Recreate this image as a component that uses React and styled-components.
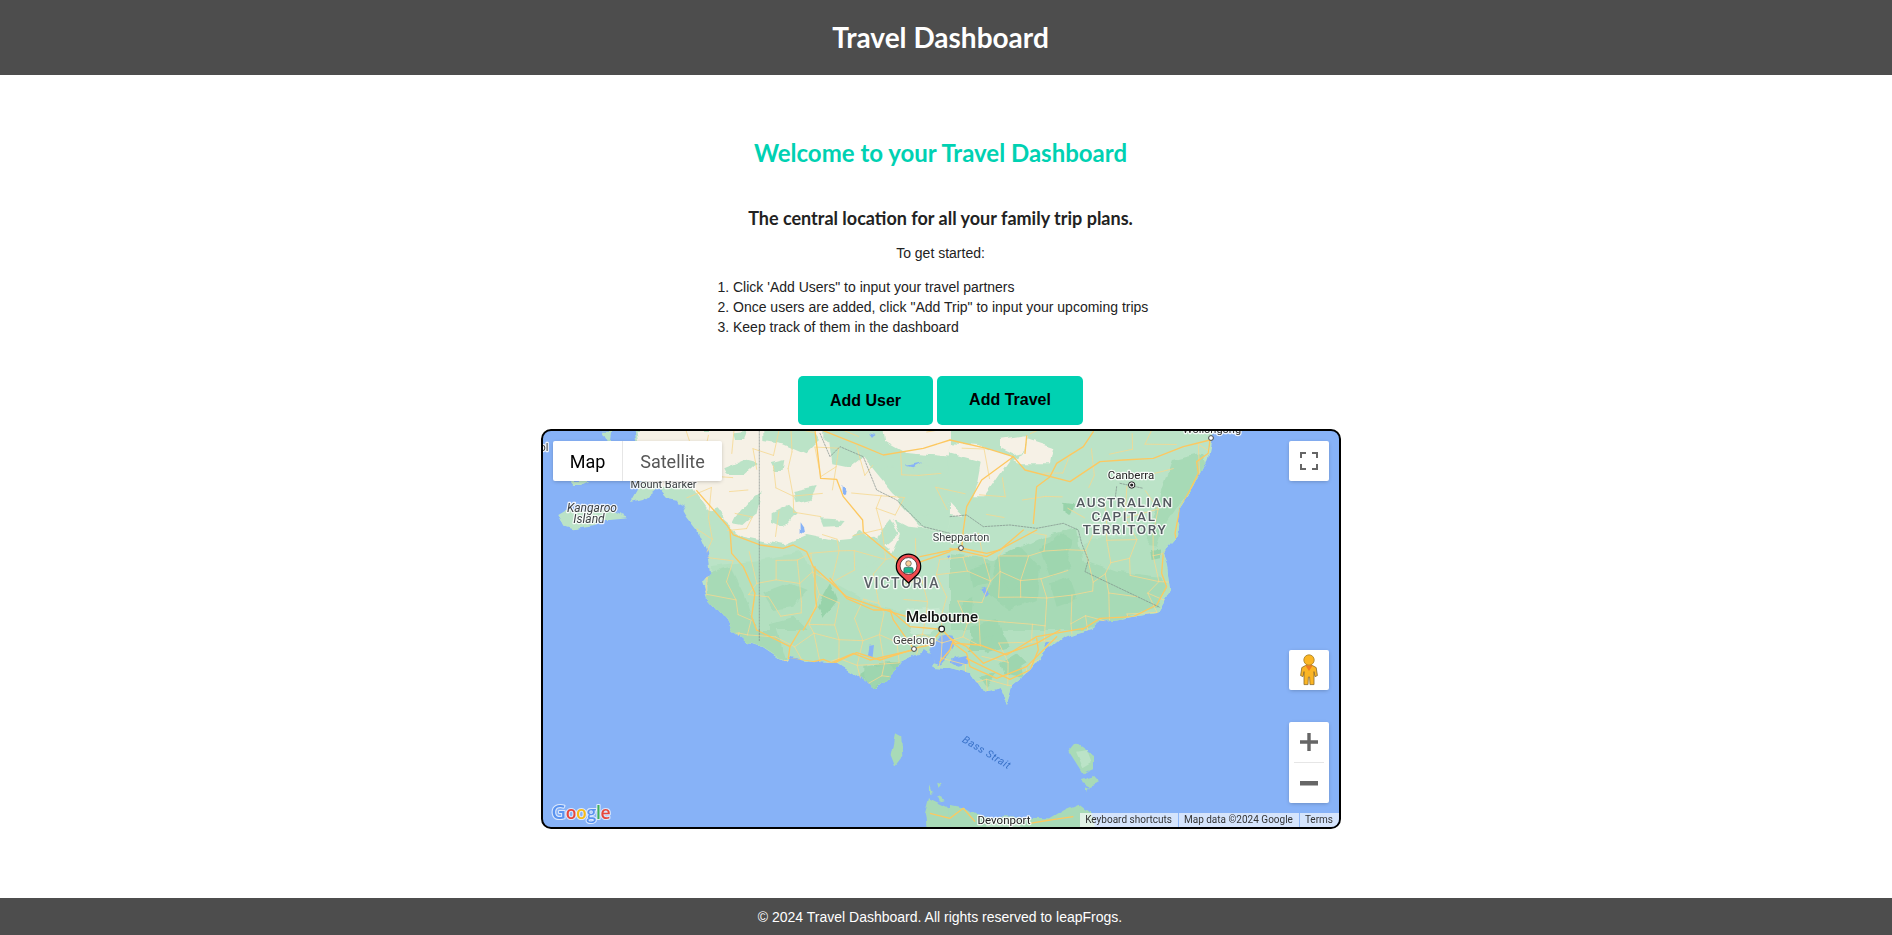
import React from "react";
import styled, { createGlobalStyle } from "styled-components";

const Global = createGlobalStyle`
  html, body { margin: 0; padding: 0; height: 100%; background: #fff; overflow: hidden; }
  body { font-family: "Liberation Sans", Arial, sans-serif; color: #222; }
  #root { height: 100%; }
`;

const Page = styled.div`
  min-height: 935px;
  display: flex;
  flex-direction: column;
`;
const Header = styled.header`
  height: 73px;
  padding: 0 11px 2px 0;
  background: #4d4d4d;
  display: flex;
  align-items: center;
  justify-content: center;
`;
const Brand = styled.h1`
  margin: 0;
  font: 700 28px/1 Lato, sans-serif;
  color: #fff;
`;
const Main = styled.main`
  flex: 1;
  padding: 63px 11px 0 0;
  display: flex;
  flex-direction: column;
  align-items: center;
`;
const Welcome = styled.h2`
  margin: 0;
  font: 700 24px/29px Lato, sans-serif;
  color: #00d1b2;
`;
const Tagline = styled.h3`
  margin: 40px 0 0;
  font: 700 18px/22px Lato, sans-serif;
  color: #222;
`;
const Intro = styled.p`
  margin: 14px 0 0;
  font-size: 14px;
  line-height: 20px;
`;
const Steps = styled.ol`
  margin: 14px 0 0;
  padding: 0 0 0 16px;
  width: 447px;
  box-sizing: border-box;
  font-size: 14px;
  line-height: 20px;
`;
const ButtonRow = styled.div`
  margin-top: 39px;
  display: flex;
  gap: 4px;
`;
const ActionButton = styled.button`
  width: ${(p) => p.$width}px;
  height: 49px;
  padding: 0 0 ${(p) => p.$lift}px;
  border: none;
  border-radius: 5px;
  background: #00d1b2;
  color: #000;
  font: 700 16px "Liberation Sans", Arial, sans-serif;
`;
const MapFrame = styled.section`
  position: relative;
  margin: 4px 0 0 1px;
  width: 800px;
  height: 400px;
  box-sizing: border-box;
  border: 2px solid #000;
  border-radius: 10px;
  overflow: hidden;
  background: #87b2f7;
`;
const MapArt = styled.svg`
  display: block;
  position: absolute;
  left: -2px;
  top: -2px;
  width: 800px;
  height: 400px;
`;
const MapLabel = styled.text`
  font-family: Roboto, sans-serif;
  font-size: ${(p) => p.$size || 11}px;
  font-weight: ${(p) => p.$weight || 400};
  font-style: ${(p) => (p.$italic ? "italic" : "normal")};
  letter-spacing: ${(p) => p.$spacing || 0}px;
  fill: ${(p) => p.$color || "#3c4043"};
  text-anchor: middle;
  paint-order: stroke;
  stroke: rgba(255, 255, 255, ${(p) => (p.$nohalo ? 0 : 0.85)});
  stroke-width: 2.5px;
  stroke-linejoin: round;
`;
const LogoLetter = styled.tspan`
  fill: ${(p) => p.$color};
  font-size: ${(p) => p.$size || 17.5}px;
`;
const LogoText = styled.text`
  font-family: "Open Sans", Roboto, sans-serif;
  font-weight: 600;
  letter-spacing: -0.3px;
  paint-order: stroke;
  stroke: rgba(255, 255, 255, 0.7);
  stroke-width: 2.2px;
  stroke-linejoin: round;
`;
const MapTypes = styled.div`
  position: absolute;
  left: 10px;
  top: 10px;
  height: 40px;
  display: flex;
  background: #fff;
  border-radius: 2px;
  box-shadow: 0 1px 4px -1px rgba(0, 0, 0, 0.3);
`;
const MapType = styled.div`
  width: ${(p) => p.$width}px;
  display: flex;
  align-items: center;
  justify-content: center;
  font: 400 18px Roboto, sans-serif;
  color: ${(p) => (p.$active ? "#000" : "#565656")};
  & + & { border-left: 1px solid #e6e6e6; }
`;
const ControlStack = styled.div`
  position: absolute;
  right: 10px;
  top: ${(p) => p.$top}px;
  width: 40px;
  background: #fff;
  border-radius: 2px;
  box-shadow: 0 1px 4px -1px rgba(0, 0, 0, 0.3);
  display: flex;
  flex-direction: column;
`;
const ControlCell = styled.div`
  height: 40px;
  display: flex;
  align-items: center;
  justify-content: center;
`;
const ControlRule = styled.div`
  height: 1px;
  margin: 0 5px;
  background: #e6e6e6;
`;
const Attribution = styled.div`
  position: absolute;
  right: 0;
  bottom: 0;
  height: 14px;
  display: flex;
  background: rgba(255, 255, 255, 0.65);
  font: 400 10px/14px Roboto, sans-serif;
  color: #333;
`;
const AttributionItem = styled.span`
  padding: 0 6px 0 5px;
  & + & { border-left: 1px solid rgba(134, 178, 247, 0.9); }
`;
const Footer = styled.footer`
  height: 37px;
  padding-right: 12px;
  background: #4d4d4d;
  color: #fff;
  display: flex;
  align-items: center;
  justify-content: center;
  font-size: 14px;
`;

const LAND = "M633 415L640 470L643 480L630 503L643 500L658 488L667 498L677 500L687 517L697 530L707 553L710 573L702 582L707 597L727 620L732 630L747 643L763 647L787 663L790 658L813 662L837 663L877 689L893 673L900 662L925 650L932 655L933 662L931 665L934 667L950 668L970 673L983 692L1000 688L1007 705L1012 685L1030 670L1047 650L1063 637L1078 633L1090 630L1100 622L1157 613L1170 590L1167 567L1163 553L1177 537L1180 507L1193 487L1208 457L1212 437L1227 415Z";

/* Fine mesh of country roads: a jittered lattice with a fixed seed. */
const buildMesh = () => {
  let seed = 20240;
  const rnd = () => {
    seed = (seed * 1664525 + 1013904223) % 4294967296;
    return seed / 4294967296;
  };
  const step = 21;
  const cols = 26;
  const rows = 14;
  const pts = [];
  for (let r = 0; r < rows; r++) {
    pts.push([]);
    for (let c = 0; c < cols; c++) {
      pts[r].push([690 + c * step + (rnd() - 0.5) * 14, 430 + r * step + (rnd() - 0.5) * 14]);
    }
  }
  let d = "";
  for (let r = 0; r < rows; r++) {
    for (let c = 0; c < cols; c++) {
      const [x, y] = pts[r][c];
      const keep = y > 540 ? 0.72 : 0.34;
      if (c + 1 < cols && rnd() < keep) d += `M${x.toFixed(1)} ${y.toFixed(1)}L${pts[r][c + 1][0].toFixed(1)} ${pts[r][c + 1][1].toFixed(1)}`;
      if (r + 1 < rows && rnd() < keep) d += `M${x.toFixed(1)} ${y.toFixed(1)}L${pts[r + 1][c][0].toFixed(1)} ${pts[r + 1][c][1].toFixed(1)}`;
    }
  }
  return d;
};
const MESH = buildMesh();

const Terrain = () => (
  <g filter="url(#tile-edge)">
    <path d={LAND} fill="#bbe3c7" />
    <g clipPath="url(#land-clip)">
      <g transform="translate(530 420) scale(.3333)" fill="#f6f1e6">
        <path d="M320 30L340 170L400 205L480 190L530 260L600 320L640 350L760 375L830 345L950 370L990 330L1050 385L1085 400L1110 345L1090 300L1130 320L1190 325L1260 340L1260 250L1180 300L1090 220L1000 110L880 60L880 30Z" />
        <path d="M1060 30L1260 30L1260 110L1130 100L1060 60Z" />
      </g>
      <g transform="translate(530 420) scale(.3333)" fill="#bbe3c7">
        <path d="M580 145L640 120L680 130L640 165L590 165Z" />
        <path d="M610 40L650 35L640 60L615 60Z" />
        <path d="M720 130L760 120L755 150L730 150Z" />
        <path d="M790 210L860 195L845 240L800 250Z" />
        <path d="M725 280L775 255L800 280L760 320L725 305Z" />
        <path d="M660 240L695 215L680 280L640 315L610 310L625 280Z" />
        <path d="M505 285L560 265L585 298L540 305Z" />
        <path d="M870 295L950 300L935 318L880 320Z" />
        <path d="M1040 400L1105 345L1080 300L1040 350Z" />
        <path d="M700 30L850 30L870 60L830 100L760 70L700 60Z" />
        <path d="M900 30L1060 30L1070 90L1130 100L1260 110L1260 170L1180 130L1100 130L1050 150L1000 100Z" />
        <path d="M900 60L1000 110L960 140L910 130Z" />
        <path d="M1100 240L1170 320L1260 340L1260 250L1180 290L1120 230Z" />
      </g>
      <g transform="translate(950 420) scale(.3333)" fill="#f6f1e6">
        <path d="M0 70L90 75L185 110L130 190L100 232L70 232L85 180L95 125L0 100Z" />
        <path d="M150 60L230 48L222 100L190 105L150 85Z" />
        <path d="M232 55L310 80L300 130L215 130L190 118L225 100Z" />
        <path d="M478 362L550 350L566 430L578 460L540 495L510 490L532 450L485 415Z" />
        <path d="M0 250L40 292L0 285Z" />
        <path d="M345 525L360 530L372 558L355 550Z" />
      </g>
      <path d="M712 566L760 560L800 552L820 575L880 608L950 622L1000 606L1050 575L1090 540L1140 535L1190 480L1230 430L1240 720L700 720Z" fill="#b3e0c0" />
      <g transform="translate(530 420) scale(.3333)" fill="#a7dab6">
        <path d="M530 460L600 440L640 520L680 630L600 630L530 530Z" />
        <path d="M700 520L780 490L830 510L790 560L730 570Z" />
        <path d="M860 560L900 490L920 540L880 590Z" fill="#98d3aa" />
        <path d="M720 610L790 590L830 630L720 630Z" />
      </g>
      <g transform="translate(530 630) scale(.3333)" fill="#a7dab6">
        <path d="M600 0L740 0L770 95L700 50L640 35Z" />
        <path d="M980 140L1040 100L1110 95L1090 130L1040 178Z" fill="#98d3aa" />
      </g>
      <g transform="translate(950 420) scale(.3333)" fill="#a7dab6">
        <path d="M280 350L380 320L400 420L500 455L630 470L650 490L620 560L500 600L400 630L0 630L0 400L130 420Z" />
        <path d="M670 120L760 100L775 150L725 210L680 260L640 320L620 380L590 375L600 330L640 200Z" />
        <path d="M340 245L370 250L360 285L340 270Z" fill="#98d3aa" />
        <path d="M140 410L210 380L270 440L260 540L180 570L110 520Z" fill="#9ed6af" />
        <path d="M280 380L330 340L370 360L350 420L290 430Z" fill="#9ed6af" />
        <path d="M300 490L360 470L380 540L320 560Z" fill="#9ed6af" />
        <path d="M600 390L630 385L630 415L605 420Z" fill="#98d3aa" />
      </g>
      <g transform="translate(830 520) scale(.3333)" fill="#9ed6af">
        <path d="M420 150L480 130L470 190L430 200Z" />
        <path d="M500 120L560 100L600 190L540 210L510 170Z" />
        <path d="M100 440L180 430L200 470L130 505L100 480Z" />
        <path d="M420 320L500 300L540 380L470 400L420 350Z" />
        <path d="M630 90L700 70L720 150L660 170Z" />
        <path d="M510 430L570 420L580 470L520 460Z" />
        <path d="M400 240L430 230L425 280L395 280Z" />
        <path d="M30 60L130 50L180 90L100 150L30 130Z" fill="#bbe3c7" />
        <path d="M230 270L330 260L350 300L300 340L240 340Z" fill="#c6e8d0" />
      </g>
      <g transform="translate(950 630) scale(.3333)" fill="#9ed6af">
        <path d="M60 30L130 20L110 60L60 60Z" />
        <path d="M150 100L200 70L230 100L180 130Z" />
        <path d="M90 140L140 130L110 170Z" />
      </g>
    </g>
    <g transform="translate(530 420) scale(.3333)" fill="#bbe3c7">
      <path d="M85 285L110 270L170 272L235 268L250 275L295 295L240 300L215 300L195 318L130 328L100 318Z" />
      <path d="M215 32L285 32L270 60L230 60Z" />
      <path d="M120 183L175 183L150 195L130 195Z" />
    </g>
    <g transform="translate(530 630) scale(.3333)" fill="#a8dab7">
      <path d="M1095 310L1117 322L1120 375L1095 408L1082 375Z" />
      <path d="M1197 505L1260 535L1260 640L1195 640L1185 550Z" />
      <path d="M1200 460L1208 480L1200 490Z" />
      <path d="M1222 455L1235 460L1225 470Z" />
      <path d="M1222 498L1245 510L1230 515Z" />
    </g>
    <g transform="translate(950 630) scale(.3333)" fill="#a8dab7">
      <path d="M0 525L50 535L90 560L300 565L350 535L390 518L425 545L440 640L0 640Z" />
      <path d="M375 338L432 378L432 415L398 430L355 362Z" />
      <path d="M390 447L430 435L450 457L420 468L395 460Z" />
      <path d="M405 473L420 472L410 485Z" />
      <path d="M378 365L410 360L425 400L400 415Z" fill="#bbe3c7" />
      <path d="M100 570L200 565L240 640L120 640Z" fill="#bbe3c7" />
    </g>
    <g transform="translate(830 520) scale(.3333)" fill="#87b2f7">
      <path d="M300 405L310 375L335 345L365 350L372 378L358 402L345 420L325 432L310 428Z" />
      <path d="M365 425L375 412L410 405L415 430L385 437Z" />
      <path d="M458 205L468 200L480 225L462 230Z" />
      <path d="M118 375L135 372L130 415L114 410Z" />
      <path d="M650 370L665 368L650 385Z" />
      <path d="M345 108L358 105L352 118Z" />
    </g>
    <g transform="translate(530 420) scale(.3333)" fill="#87b2f7">
      <path d="M245 20L305 20L290 60L240 60Z" />
      <path d="M450 245L468 255L458 275L445 262Z" />
      <path d="M812 310L822 325L825 340L812 335Z" />
      <path d="M935 195L950 210L948 225L935 215Z" />
      <path d="M1020 40L1040 45L1030 52Z" />
      <path d="M1130 140L1180 130L1150 145Z" />
    </g>
  </g>
);

const Roads = () => (
  <g fill="none" strokeLinejoin="round" strokeLinecap="round" clipPath="url(#land-clip)">
    <path d={MESH} stroke="#f6d88f" strokeWidth=".8" />

    <g transform="translate(530 420) scale(.3333)" stroke="#fdc860" strokeWidth="4">
      <path d="M855 32L872 175L920 178L940 230L998 300L1000 335L1090 410L1130 440" />
      <path d="M500 212L590 315L610 345L690 375L760 385L790 375L830 395L850 440L950 530L1080 575L1130 590" />
      <path d="M600 330L605 400L640 440L675 520L665 590L680 630" />
      <path d="M855 440L855 520L860 560L820 630" />
      <path d="M880 32L1000 80L1060 105L1180 85L1260 60" />
      <path d="M1260 395L1130 440" />
    </g>
    <g transform="translate(950 420) scale(.3333)" stroke="#fdc860" strokeWidth="4">
      <path d="M0 60L110 85L190 110L225 150L360 185L450 125L520 120L610 115L700 80L780 60" />
      <path d="M430 35L400 80L320 130L300 170L260 200L250 310" />
      <path d="M190 110L95 180L50 260L40 330L35 385" />
      <path d="M230 48L225 100M0 385L110 410L260 330" />
      <path d="M780 60L775 100L740 125L745 160L720 210L690 265L675 340L680 365L640 400L635 460L650 500L620 555L550 590L450 595L395 630" />
    </g>
    <g transform="translate(830 520) scale(.3333)" stroke="#fdc860" strokeWidth="4">
      <path d="M0 175L50 235L130 270L180 270L240 320L335 328" />
      <path d="M180 270L190 300L250 385" />
      <path d="M250 385L300 375L335 328" />
      <path d="M0 430L70 400L120 420L250 390" />
      <path d="M335 328L375 370L450 375L530 405L620 350L760 325" />
      <path d="M370 360L360 390L330 425M370 370L410 400L420 440L500 475L590 440L680 350" />
      <path d="M270 110L393 84L470 100L510 90L580 30" />
    </g>
    <g transform="translate(530 630) scale(.3333)" stroke="#fdc860" strokeWidth="4">
      <path d="M680 0L780 50L775 85L850 95L880 88L910 100L980 68L1050 90L1150 58M810 0L780 50" />
    </g>
    <g transform="translate(950 630) scale(.3333)" stroke="#fdc860" strokeWidth="4">
      <path d="M0 25L50 50L100 100L170 70L260 40L330 0" />
      <path d="M50 85L100 110L180 148L240 120L265 60L260 25" />
    </g>
    <g transform="translate(530 420) scale(.3333)" stroke="#7b8a86" strokeWidth="2" strokeDasharray="5 4">
      <path d="M688 32L688 630" />
      <path d="M870 40L900 110L930 80L1000 110L1040 210L1100 240L1180 320L1260 340" />
    </g>
    <g transform="translate(950 420) scale(.3333)" stroke="#7b8a86" strokeWidth="2" strokeDasharray="5 4">
      <path d="M0 290L50 285L100 320L180 315L260 325L340 310L385 330L395 370L415 420L405 455L650 572" />
      <path d="M500 200L495 240M510 190L580 205" />
    </g>
    <g transform="translate(530 630) scale(.3333)" stroke="#7b8a86" strokeWidth="2" strokeDasharray="5 4">
      <path d="M688 0L688 35" />
    </g>
  </g>
);

const TasmaniaRoads = () => (
  <g transform="translate(950 630) scale(.3333)" fill="none" stroke="#fdc860" strokeWidth="4" strokeLinejoin="round">
    <path d="M-60 550L0 565L40 535L75 575M240 580L300 570L370 560" />
  </g>
);

const Labels = () => (
  <g>
    <MapLabel x="663.5" y="488">Mount Barker</MapLabel>
    <MapLabel x="592" y="512" $size="12" $italic>Kangaroo</MapLabel>
    <MapLabel x="589" y="523" $size="12" $italic>Island</MapLabel>
    <MapLabel x="544" y="451">ol</MapLabel>
    <MapLabel x="961" y="541">Shepparton</MapLabel>
    <MapLabel x="902" y="588" $size="14" $weight="500" $spacing="1.8" $color="#5b6067">VICTORIA</MapLabel>
    <MapLabel x="942" y="622" $size="15" $weight="500" $color="#111">Melbourne</MapLabel>
    <MapLabel x="914" y="644" $size="11.5" $color="#444">Geelong</MapLabel>
    <MapLabel x="1131" y="479" $size="11.5" $color="#222">Canberra</MapLabel>
    <MapLabel x="1125" y="507" $size="13.5" $weight="500" $spacing="1.6" $color="#53585f">AUSTRALIAN</MapLabel>
    <MapLabel x="1124" y="521" $size="13.5" $weight="500" $spacing="1.6" $color="#53585f">CAPITAL</MapLabel>
    <MapLabel x="1125" y="534" $size="13.5" $weight="500" $spacing="1.6" $color="#53585f">TERRITORY</MapLabel>
    <MapLabel x="1212" y="433" $color="#333">Wollongong</MapLabel>
    <MapLabel x="1004" y="824" $size="11.5" $color="#222">Devonport</MapLabel>
    <MapLabel x="987" y="756" $size="10.5" $italic $nohalo $color="#3a72c8" $spacing=".5" transform="rotate(31 987 752)">Bass Strait</MapLabel>

    <circle cx="961" cy="548" r="2.4" fill="#fff" stroke="#444" strokeWidth="1" />
    <circle cx="914" cy="649" r="2.4" fill="#fff" stroke="#444" strokeWidth="1" />
    <circle cx="941.7" cy="629" r="2.8" fill="#fff" stroke="#222" strokeWidth="1.2" />
    <circle cx="1211" cy="438" r="2.4" fill="#fff" stroke="#444" strokeWidth="1" />
    <circle cx="1131.7" cy="485" r="3.2" fill="#fff" stroke="#222" strokeWidth="1" />
    <circle cx="1131.7" cy="485" r="1.6" fill="#222" />
  </g>
);

const Pin = () => (
  <g>
    <path d="M908.5 583L899.5 574.5A12.2 12.2 0 1 1 917.5 574.5Z" fill="#f04a4f" stroke="#000" strokeWidth="1.2" strokeLinejoin="round" />
    <circle cx="908.5" cy="566" r="8.4" fill="#fff" stroke="#000" strokeWidth=".6" />
    <circle cx="908.5" cy="563.5" r="2.8" fill="#f7cf9d" stroke="#222" strokeWidth=".5" />
    <path d="M903.8 572.8L903.8 569Q903.8 567.3 905.8 567.3L911.2 567.3Q913.2 567.3 913.2 569L913.2 572.8Z" fill="#20b48f" stroke="#222" strokeWidth=".4" />
  </g>
);

const GoogleLogo = () => (
  <LogoText x="551.5" y="819">
    <LogoLetter $color="#5a93ef" $size={20}>G</LogoLetter>
    <LogoLetter $color="#e8483c">o</LogoLetter>
    <LogoLetter $color="#f7bb18">o</LogoLetter>
    <LogoLetter $color="#5a93ef">g</LogoLetter>
    <LogoLetter $color="#3eb05a">l</LogoLetter>
    <LogoLetter $color="#e8483c">e</LogoLetter>
  </LogoText>
);

const FullscreenIcon = () => (
  <svg width="18" height="18" viewBox="0 0 18 18">
    <path d="M1 6V1H6M12 1H17V6M17 12V17H12M6 17H1V12" fill="none" stroke="#666" strokeWidth="2" />
  </svg>
);
const PegmanIcon = () => (
  <svg width="18" height="32" viewBox="0 0 18 32">
    <path d="M5.4 11.6Q9 9.6 12.6 11.6L16.2 13.6L17.4 21.6L15 22.6L14 17.6L14 30.6L10 30.6L9.6 23L8.4 23L8 30.6L4 30.6L4 17.6L3 22.6L.6 21.6L1.8 13.6Z" fill="#fbb524" stroke="#8a6a2a" strokeWidth=".8" strokeLinejoin="round" />
    <circle cx="9" cy="6" r="5.2" fill="#fbb524" stroke="#a57d22" strokeWidth=".8" />
    <path d="M5.4 11.6L9 17L12.6 11.6Z" fill="#ef7b22" />
  </svg>
);
const PlusIcon = () => (
  <svg width="18" height="18" viewBox="0 0 18 18">
    <path d="M7.3 0H10.7V7.3H18V10.7H10.7V18H7.3V10.7H0V7.3H7.3Z" fill="#666" />
  </svg>
);
const MinusIcon = () => (
  <svg width="18" height="18" viewBox="0 0 18 18">
    <path d="M0 7H18V11.4H0Z" fill="#666" />
  </svg>
);

export default function App() {
  return (
    <Page>
      <Global />
      <Header>
        <Brand>Travel Dashboard</Brand>
      </Header>
      <Main>
        <Welcome>Welcome to your Travel Dashboard</Welcome>
        <Tagline>The central location for all your family trip plans.</Tagline>
        <Intro>To get started:</Intro>
        <Steps>
          <li>Click 'Add Users" to input your travel partners</li>
          <li>Once users are added, click "Add Trip" to input your upcoming trips</li>
          <li>Keep track of them in the dashboard</li>
        </Steps>
        <ButtonRow>
          <ActionButton $width={135} $lift={0}>Add User</ActionButton>
          <ActionButton $width={146} $lift={2}>Add Travel</ActionButton>
        </ButtonRow>
        <MapFrame>
          <MapArt viewBox="541 429 800 400">
            <defs>
              <filter id="tile-edge" filterUnits="userSpaceOnUse" x="541" y="425" width="800" height="410">
                <feTurbulence type="fractalNoise" baseFrequency="0.07" numOctaves="2" seed="7" result="noise" />
                <feDisplacementMap in="SourceGraphic" in2="noise" scale="7" xChannelSelector="R" yChannelSelector="G" />
                <feGaussianBlur stdDeviation="0.5" />
              </filter>
              <clipPath id="land-clip">
                <path d={LAND} />
              </clipPath>
            </defs>
            <Terrain />
            <Roads />
            <TasmaniaRoads />
            <Labels />
            <Pin />
            <GoogleLogo />
          </MapArt>
          <MapTypes>
            <MapType $width={69} $active>Map</MapType>
            <MapType $width={99}>Satellite</MapType>
          </MapTypes>
          <ControlStack $top={10}>
            <ControlCell><FullscreenIcon /></ControlCell>
          </ControlStack>
          <ControlStack $top={219}>
            <ControlCell><PegmanIcon /></ControlCell>
          </ControlStack>
          <ControlStack $top={291}>
            <ControlCell><PlusIcon /></ControlCell>
            <ControlRule />
            <ControlCell><MinusIcon /></ControlCell>
          </ControlStack>
          <Attribution>
            <AttributionItem>Keyboard shortcuts</AttributionItem>
            <AttributionItem>Map data ©2024 Google</AttributionItem>
            <AttributionItem>Terms</AttributionItem>
          </Attribution>
        </MapFrame>
      </Main>
      <Footer>© 2024 Travel Dashboard. All rights reserved to leapFrogs.</Footer>
    </Page>
  );
}
